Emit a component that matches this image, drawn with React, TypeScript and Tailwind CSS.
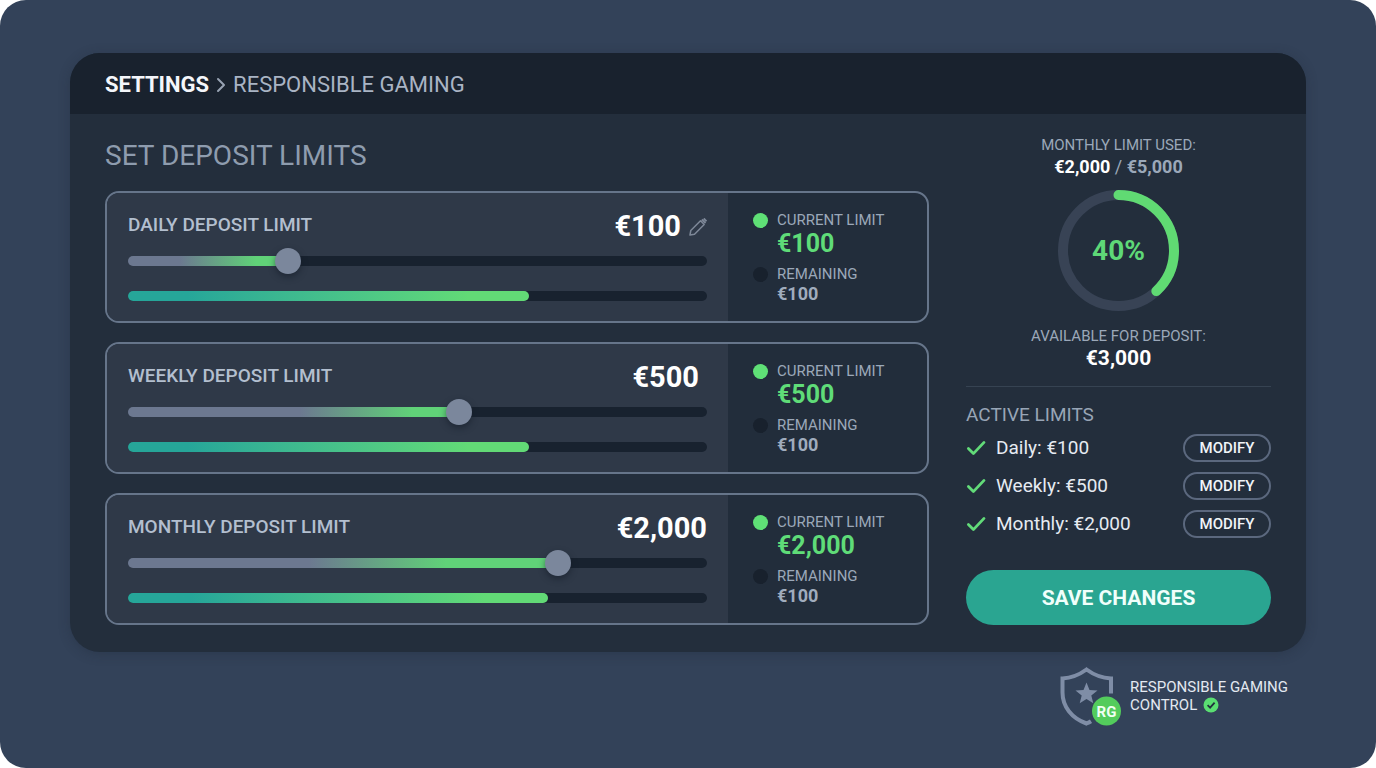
import { useState } from "react";
import type { CSSProperties } from "react";
import { ChevronRight } from "lucide-react";
import clsx from "clsx";

interface DepositLimit {
    id: string;
    name: string;
    max: number;
    greyUntil: number;
    greenFrom: number;
    used: number;
    remaining: number;
    editable?: boolean;
    inset?: boolean;
}

const LIMITS: DepositLimit[] = [
    { id: "daily", name: "Daily", max: 375, greyUntil: 0.32, greenFrom: 0.8, used: 69.3, remaining: 100, editable: true },
    { id: "weekly", name: "Weekly", max: 870, greyUntil: 0.52, greenFrom: 0.86, used: 69.3, remaining: 100, inset: true },
    { id: "monthly", name: "Monthly", max: 2650, greyUntil: 0.42, greenFrom: 0.74, used: 72.5, remaining: 100 },
];

const MONTHLY_CAP = 5000;

const formatEuro = (amount: number) => `€${amount.toLocaleString("en-US")}`;

const PencilIcon = () => (
    <svg viewBox="0 0 18 18" className="size-[18px]" fill="none" stroke="currentColor" strokeWidth="1.5" strokeLinejoin="round" aria-hidden="true">
        <path d="M1 17 1.800 12.500 11.500 2.800 15.200 6.500 5.500 16.200Z" />
        <path d="m12.800 1.500 3.700 3.700" strokeWidth="1.800" />
        <path d="m14.700 0.500 2.800 2.800" strokeWidth="2" />
    </svg>
);

const CheckIcon = () => (
    <svg viewBox="0 0 20 16" className="h-4 w-5" fill="none" stroke="#62db79" strokeWidth="2.8" strokeLinecap="round" strokeLinejoin="round" aria-hidden="true">
        <path d="m2.4 8.6 5 5L18 2.4" />
    </svg>
);

const ShieldLogo = () => (
    <svg viewBox="0 0 62 60" className="h-[60px] w-[62px]" aria-hidden="true">
        <path
            d="M51 27.5V12.5C42 12 34 9 26.5 3.5 19 9 11 12 2.5 12.5v14c0 14 9 25.5 24 31 1.7-.7 3.2-1.4 4.5-2.2"
            fill="none"
            stroke="#7f8da6"
            strokeWidth="4"
        />
        <path
            d="m26.5 16.5 3 7.4 8 .5-6.2 5.1 2 7.8-6.8-4.3-6.8 4.3 2-7.8-6.2-5.1 8-.5Z"
            fill="#7f8da6"
        />
        <circle cx="46.5" cy="45" r="14.5" fill="#53cc5c" />
        <text x="46.5" y="50.5" textAnchor="middle" fontSize="15" fontWeight="700" fill="#f0fff2">
            RG
        </text>
    </svg>
);

const VerifiedIcon = () => (
    <svg viewBox="0 0 16 16" className="size-4" aria-hidden="true">
        <circle cx="8" cy="8" r="7.5" fill="#5ade72" />
        <path d="m4.6 8.2 2.5 2.5 4.5-5" fill="none" stroke="#22303d" strokeWidth="1.8" />
    </svg>
);

const THUMB = 26;

interface LimitCardProps {
    limit: DepositLimit;
    value: number;
    onChange: (value: number) => void;
}

const LimitCard = ({ limit, value, onChange }: LimitCardProps) => {
    // the thumb stays inside the track, so its centre is not at a plain percentage
    const ratio = value / limit.max;
    const at = (part: number) => `calc((${THUMB / 2}px + (100% - ${THUMB}px) * ${ratio}) * ${part})`;
    const track: CSSProperties = {
        backgroundImage: `linear-gradient(to right, #6c7890 0, #6c7890 ${at(limit.greyUntil)}, #60d278 ${at(limit.greenFrom)}, #60d278 ${at(1)}, #18222f ${at(1)})`,
    };

    return (
        <section className="flex overflow-hidden rounded-[14px] border-2 border-[#66758a] bg-[#222d3b]">
            <div className="min-w-0 flex-1 bg-[#2f3948] px-[21px] pt-[14px] pb-5">
                <div className="flex h-9 items-center justify-between">
                    <label htmlFor={limit.id} className="text-[19px] font-medium text-[#b3bfcf] uppercase">
                        {limit.name} deposit limit
                    </label>
                    <div className={clsx("flex items-center gap-2 pt-1", limit.inset && "pr-2")}>
                        <output htmlFor={limit.id} className="text-[29px] font-bold text-white">
                            {formatEuro(value)}
                        </output>
                        {limit.editable && (
                            <button type="button" aria-label="Edit limit" className="text-[#7d8797]">
                                <PencilIcon />
                            </button>
                        )}
                    </div>
                </div>
                <div className="mt-[5px] flex h-[26px] items-center">
                    <input
                        id={limit.id}
                        type="range"
                        min={0}
                        max={limit.max}
                        step={5}
                        value={value}
                        onChange={(e) => onChange(Number(e.target.value))}
                        style={track}
                        className="h-[10px] w-full cursor-pointer appearance-none rounded-full [&::-webkit-slider-thumb]:size-[26px] [&::-webkit-slider-thumb]:appearance-none [&::-webkit-slider-thumb]:rounded-full [&::-webkit-slider-thumb]:bg-[#7b879c] [&::-webkit-slider-thumb]:shadow-[0_3px_6px_rgba(15,23,35,0.5)]"
                    />
                </div>
                <div
                    role="progressbar"
                    aria-label={`${limit.name} limit used`}
                    aria-valuenow={limit.used}
                    className="mt-[17px] h-[10px] rounded-full bg-[#18222f]"
                >
                    <div
                        className="h-full rounded-full bg-linear-to-r from-[#26a699] from-15% to-[#62da76] to-85%"
                        style={{ width: `${limit.used}%` }}
                    />
                </div>
            </div>
            <dl className="grid w-[199px] shrink-0 grid-cols-[15px_1fr] content-start gap-x-[9px] pt-[17px] pl-[25px]">
                <dt className="col-span-2 grid grid-cols-subgrid items-center text-[15px] leading-5 text-[#9ba8b9] uppercase">
                    <span className="size-[15px] rounded-full bg-[#5fe076]" />
                    Current limit
                </dt>
                <dd className="col-start-2 text-[25px] leading-7 font-bold text-[#5fdc78]">{formatEuro(value)}</dd>
                <dt className="col-span-2 mt-[6px] grid grid-cols-subgrid items-center text-[15px] leading-5 text-[#9ba8b9] uppercase">
                    <span className="size-[15px] rounded-full bg-[#18212d]" />
                    Remaining
                </dt>
                <dd className="col-start-2 text-lg leading-5 font-bold text-[#a0acbd]">{formatEuro(limit.remaining)}</dd>
            </dl>
        </section>
    );
};

const UsageRing = ({ percent }: { percent: number }) => {
    const radius = 55.5;
    const length = 2 * Math.PI * radius;
    return (
        <div className="relative mt-3 size-[121px]">
            <svg viewBox="0 0 121 121" className="size-full" fill="none" strokeWidth="10" aria-hidden="true">
                <circle cx="60.5" cy="60.5" r={radius} stroke="#384355" />
                <circle
                    cx="60.5"
                    cy="60.5"
                    r={radius}
                    stroke="#60da73"
                    strokeLinecap="round"
                    strokeDasharray={`${(length * (percent - 2)) / 100} ${length}`}
                    transform="rotate(-90 60.5 60.5)"
                />
            </svg>
            <span className="absolute inset-0 flex items-center justify-center text-[28px] font-bold text-[#5ed877]">
                {percent}%
            </span>
        </div>
    );
};

const App = () => {
    const [values, setValues] = useState<Record<string, number>>({ daily: 100, weekly: 500, monthly: 2000 });
    const percent = Math.round((values.monthly / MONTHLY_CAP) * 100);

    return (
        <div className="min-h-screen rounded-[26px] bg-[#334259] px-[70px] pt-[53px] font-[Roboto,sans-serif]">
            <main className="overflow-hidden rounded-[30px] bg-[#232e3c] shadow-[0_2px_12px_rgba(25,35,50,0.3)]">
                <nav aria-label="Breadcrumb" className="flex h-[61px] items-center bg-[#19222e] px-[35px] pt-0.5 text-[22px]">
                    <a href="#settings" className="font-bold text-[#f4f6fa]">SETTINGS</a>
                    <ChevronRight className="size-6 text-[#98a3b3]" strokeWidth={2} />
                    <span className="text-[#a9b4c4]">RESPONSIBLE GAMING</span>
                </nav>
                <div className="flex gap-[37px] px-[35px] pb-[27px]">
                    <div className="min-w-0 flex-1 pt-6">
                        <h1 className="text-[28px] leading-9 text-[#8e9cae]">SET DEPOSIT LIMITS</h1>
                        <div className="mt-[17px] flex flex-col gap-[19px]">
                            {LIMITS.map((limit) => (
                                <LimitCard
                                    key={limit.id}
                                    limit={limit}
                                    value={values[limit.id]}
                                    onChange={(value) => setValues({ ...values, [limit.id]: value })}
                                />
                            ))}
                        </div>
                    </div>
                    <aside className="w-[305px] shrink-0 pt-5">
                        <div className="flex flex-col items-center">
                            <p className="text-[15px] leading-[22px] text-[#9ba8b9]">MONTHLY LIMIT USED:</p>
                            <p className="text-lg leading-[22px] text-[#9ba8b9]">
                                <span className="font-bold text-white">{formatEuro(values.monthly)}</span> /{" "}
                                <span className="font-bold">{formatEuro(MONTHLY_CAP)}</span>
                            </p>
                            <UsageRing percent={percent} />
                            <p className="mt-[14px] text-[15px] leading-[22px] text-[#9ba8b9]">AVAILABLE FOR DEPOSIT:</p>
                            <p className="text-[21px] leading-[22px] font-bold text-white">
                                {formatEuro(MONTHLY_CAP - values.monthly)}
                            </p>
                        </div>
                        <hr className="mt-[17px] border-[#364352]" />
                        <h2 className="mt-4 text-[19px] leading-6 text-[#98a5b6]">ACTIVE LIMITS</h2>
                        <ul className="mt-[7px] flex flex-col gap-[10px]">
                            {LIMITS.map((limit) => (
                                <li key={limit.id} className="flex h-7 items-center text-[19px] text-[#e6ebf2]">
                                    <CheckIcon />
                                    <span className="ml-[10px] flex-1">
                                        {limit.name}: {formatEuro(values[limit.id])}
                                    </span>
                                    <button
                                        type="button"
                                        className="h-7 w-[88px] rounded-full border-2 border-[#5b687e] text-[15px] leading-6 font-medium text-[#f0f4f8]"
                                    >
                                        MODIFY
                                    </button>
                                </li>
                            ))}
                        </ul>
                        <button
                            type="button"
                            className="mt-8 h-[55px] w-full rounded-full bg-[#2aa591] pt-0.5 text-[21px] font-bold text-[#f0fffb]"
                        >
                            SAVE CHANGES
                        </button>
                    </aside>
                </div>
            </main>
            <footer className="flex items-center justify-end gap-2 pt-[14px] pr-[18px]">
                <ShieldLogo />
                <p className="text-[15px] leading-[18px] text-[#e3e9f1]">
                    RESPONSIBLE GAMING
                    <span className="flex items-center gap-[6px]">
                        CONTROL <VerifiedIcon />
                    </span>
                </p>
            </footer>
        </div>
    );
};

export default App;
